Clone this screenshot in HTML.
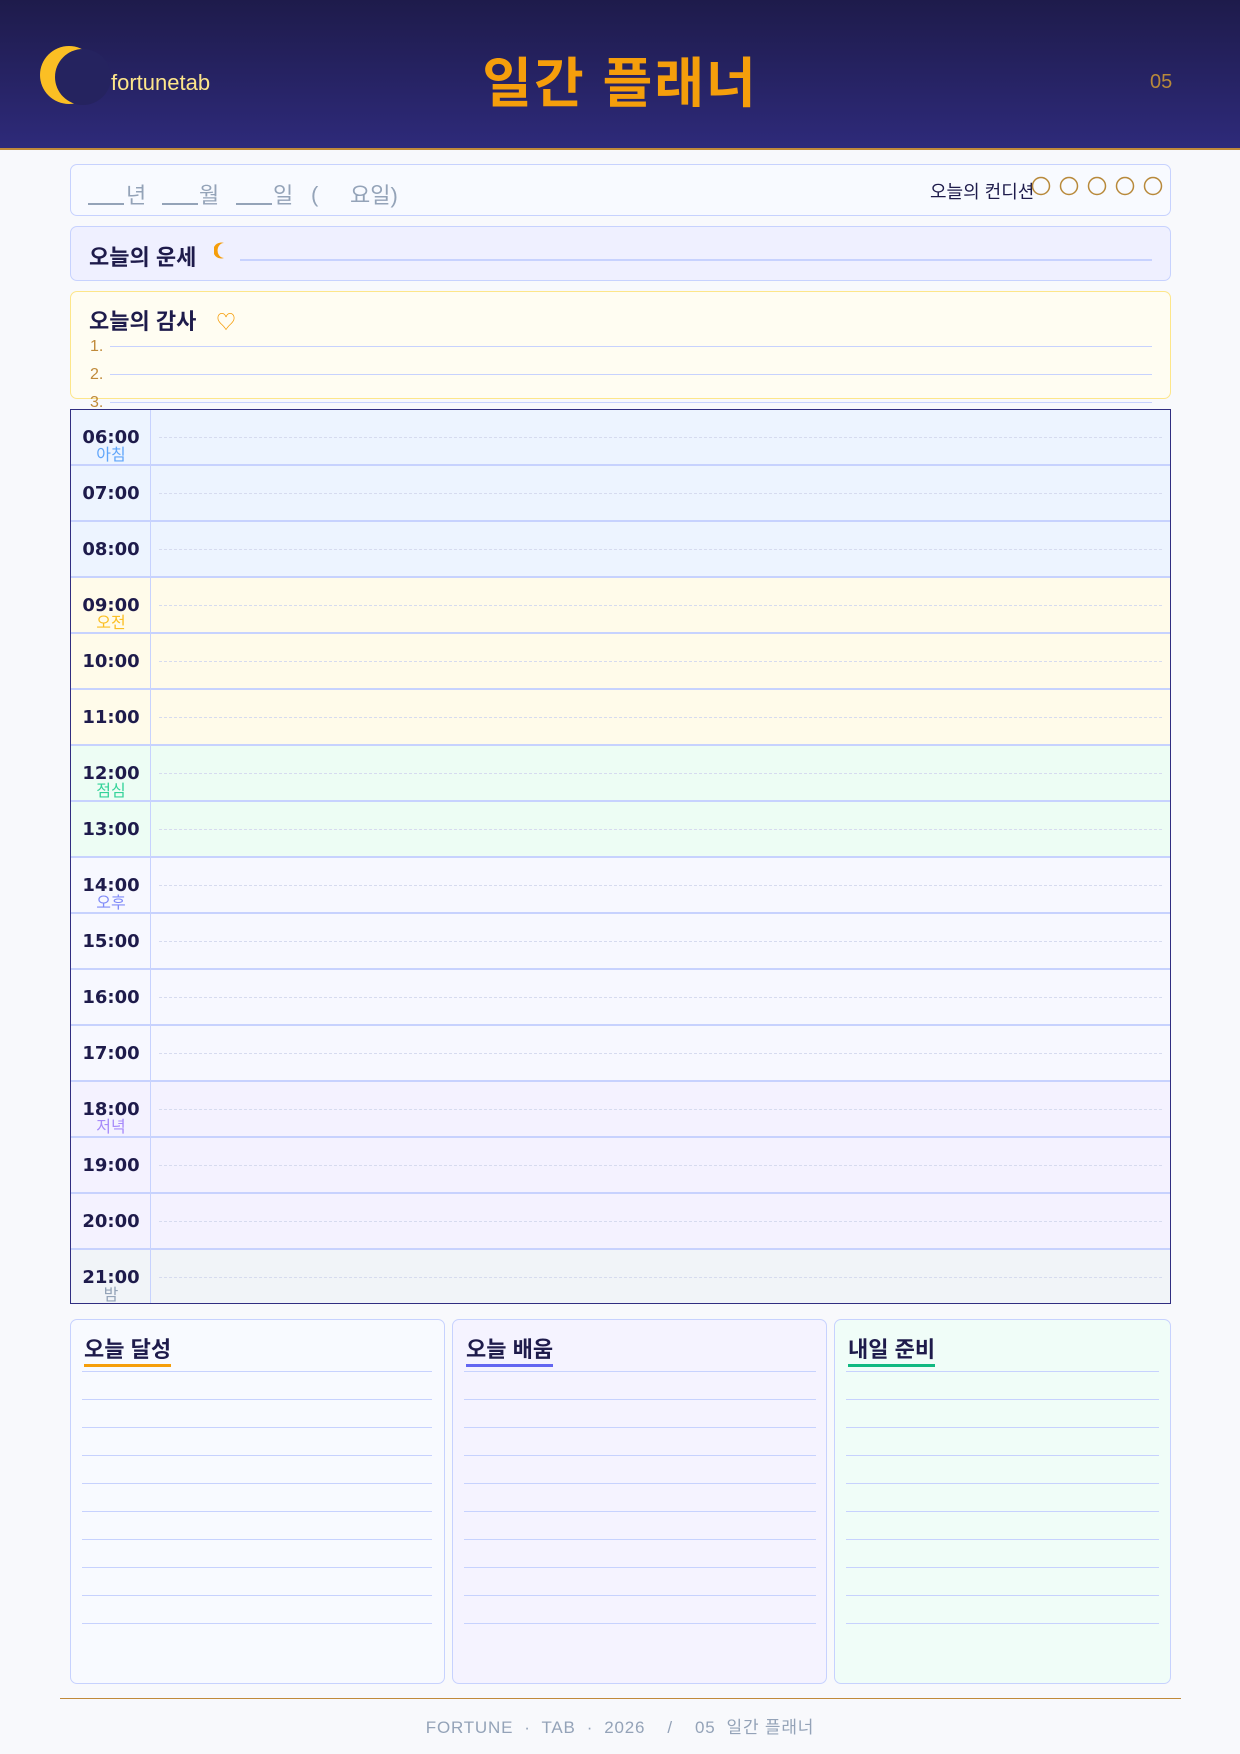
<!DOCTYPE html>
<html><head><meta charset="utf-8">
<style>
*{margin:0;padding:0;box-sizing:border-box}
body{width:1240px;height:1754px;background:#f8f9fc;position:relative;font-family:"Liberation Sans","Noto Sans CJK KR",sans-serif;overflow:hidden}
.abs{position:absolute}
.hdr{left:0;top:0;width:1240px;height:150px;background:linear-gradient(#1e1b4b,#2e2a7a);border-bottom:2px solid #c08a3a}
.box{position:absolute;border:1px solid #c7d2fe;border-radius:7px}
.tt{position:absolute;left:70px;top:409px;width:1101px;height:895px;border:1.5px solid #312e81;background:#fff;overflow:hidden}
.row{position:absolute;left:0;width:100%;height:56px;border-bottom:2px solid #c7d2fe}
.row .lc{position:absolute;left:0;top:0;width:80px;height:56px;border-right:1px solid #c7d2fe}
.row .t{position:absolute;left:0;width:80px;top:17px;text-align:center;font-family:"DejaVu Sans",sans-serif;font-weight:bold;font-size:18px;color:#1e1b4b}
.row .d{position:absolute;left:88px;right:8px;top:27px;border-top:1px dashed #d6dbef}
.row .lab{position:absolute;left:0;width:80px;top:31px;text-align:center;font-size:16px}
.ln{position:absolute;height:1px;background:#c7d2fe}
.bt{position:absolute;font-size:22px;font-weight:bold;color:#1e1b4b;top:12px;left:13px;padding-bottom:0px}
.dt{position:absolute;top:178px;font-size:22px;color:#94a3b8}
.us{position:absolute;top:203px;height:2px;width:36px;background:#94a3b8}
</style></head><body>
<div class="abs hdr"></div>
<svg class="abs" style="left:30px;top:40px" width="90" height="75"><circle cx="39" cy="35" r="29" fill="#fbbf24"/><circle cx="53" cy="37" r="28" fill="#25235f"/></svg>
<div class="abs" style="left:111px;top:70px;font-size:22px;color:#fde68a">fortunetab</div>
<div class="abs" style="left:0;width:1240px;top:52px;text-align:center;font-size:54px;font-weight:bold;color:#f59e0b;line-height:64px;letter-spacing:2px">일간 플래너</div>
<div class="abs" style="left:1150px;top:71px;font-size:20px;color:#b8893a">05</div>

<div class="box" style="left:70px;top:164px;width:1101px;height:52px;background:#f8faff"></div>
<div class="us" style="left:88px"></div><div class="dt" style="left:126px">년</div>
<div class="us" style="left:162px"></div><div class="dt" style="left:199px">월</div>
<div class="us" style="left:236px"></div><div class="dt" style="left:273px">일</div>
<div class="dt" style="left:311px;top:182px">(</div><div class="dt" style="left:350px">요일)</div>
<div class="abs" style="left:930px;top:178px;font-size:18px;color:#1e1b4b">오늘의 컨디션</div>
<svg class="abs" style="left:1025px;top:170px" width="150" height="34"><g fill="none" stroke="#b8893a" stroke-width="1.5"><circle cx="16" cy="16" r="8.5"/><circle cx="44" cy="16" r="8.5"/><circle cx="72" cy="16" r="8.5"/><circle cx="100" cy="16" r="8.5"/><circle cx="128" cy="16" r="8.5"/></g></svg>

<div class="box" style="left:70px;top:226px;width:1101px;height:55px;background:#eff0ff"></div>
<div class="abs" style="left:89px;top:240px;font-size:22px;font-weight:bold;color:#1e1b4b">오늘의 운세</div>
<svg class="abs" style="left:214px;top:242px" width="14" height="18"><path d="M10 1 A8 8 0 1 0 10 16 A6 7 0 1 1 10 1Z" fill="#f59e0b"/></svg>
<div class="ln" style="left:240px;top:259px;width:912px;height:2px"></div>

<div class="box" style="left:70px;top:291px;width:1101px;height:108px;background:#fffdf2;border-color:#fde68a"></div>
<div class="abs" style="left:89px;top:304px;font-size:22px;font-weight:bold;color:#1e1b4b">오늘의 감사</div>
<div class="abs" style="left:216px;top:306px;font-size:20px;color:#f59e0b">♡</div>
<div class="abs" style="left:90px;top:338px;font-size:16px;color:#c08a3a">1.</div>
<div class="abs" style="left:90px;top:366px;font-size:16px;color:#c08a3a">2.</div>
<div class="abs" style="left:90px;top:394px;font-size:16px;color:#c08a3a">3.</div>
<div class="ln" style="left:110px;top:346px;width:1042px"></div>
<div class="ln" style="left:110px;top:374px;width:1042px"></div>
<div class="ln" style="left:110px;top:402px;width:1042px"></div>

<div class="tt">
<div class="row" style="top:0;background:#edf4ff"><div class="lc"></div><div class="t">06:00</div><div class="lab" style="color:#60a5fa">아침</div><div class="d"></div></div>
<div class="row" style="top:56px;background:#edf4ff"><div class="lc"></div><div class="t">07:00</div><div class="d"></div></div>
<div class="row" style="top:112px;background:#edf4ff"><div class="lc"></div><div class="t">08:00</div><div class="d"></div></div>
<div class="row" style="top:168px;background:#fffbea"><div class="lc"></div><div class="t">09:00</div><div class="lab" style="color:#fbbf24">오전</div><div class="d"></div></div>
<div class="row" style="top:224px;background:#fffbea"><div class="lc"></div><div class="t">10:00</div><div class="d"></div></div>
<div class="row" style="top:280px;background:#fffbea"><div class="lc"></div><div class="t">11:00</div><div class="d"></div></div>
<div class="row" style="top:336px;background:#edfdf4"><div class="lc"></div><div class="t">12:00</div><div class="lab" style="color:#34d399">점심</div><div class="d"></div></div>
<div class="row" style="top:392px;background:#edfdf4"><div class="lc"></div><div class="t">13:00</div><div class="d"></div></div>
<div class="row" style="top:448px;background:#f7f8ff"><div class="lc"></div><div class="t">14:00</div><div class="lab" style="color:#818cf8">오후</div><div class="d"></div></div>
<div class="row" style="top:504px;background:#f7f8ff"><div class="lc"></div><div class="t">15:00</div><div class="d"></div></div>
<div class="row" style="top:560px;background:#f7f8ff"><div class="lc"></div><div class="t">16:00</div><div class="d"></div></div>
<div class="row" style="top:616px;background:#f7f8ff"><div class="lc"></div><div class="t">17:00</div><div class="d"></div></div>
<div class="row" style="top:672px;background:#f4f2ff"><div class="lc"></div><div class="t">18:00</div><div class="lab" style="color:#a78bfa">저녁</div><div class="d"></div></div>
<div class="row" style="top:728px;background:#f4f2ff"><div class="lc"></div><div class="t">19:00</div><div class="d"></div></div>
<div class="row" style="top:784px;background:#f4f2ff"><div class="lc"></div><div class="t">20:00</div><div class="d"></div></div>
<div class="row" style="top:840px;background:#f1f4f8;border-bottom:none"><div class="lc"></div><div class="t">21:00</div><div class="lab" style="color:#94a3b8">밤</div><div class="d"></div></div>
</div>

<div class="box" style="left:70px;top:1319px;width:375px;height:365px;background:#f8faff"><div class="bt" style="border-bottom:3px solid #f59e0b">오늘 달성</div></div>
<div class="box" style="left:452px;top:1319px;width:375px;height:365px;background:#f5f3ff"><div class="bt" style="border-bottom:3px solid #6366f1">오늘 배움</div></div>
<div class="box" style="left:834px;top:1319px;width:337px;height:365px;background:#f0fdf8"><div class="bt" style="border-bottom:3px solid #10b981">내일 준비</div></div>
<div id="lines"></div>
<script>
var h='';for(var i=0;i<10;i++){var y=1371+i*28;h+='<div class="ln" style="left:82px;top:'+y+'px;width:350px"></div><div class="ln" style="left:464px;top:'+y+'px;width:352px"></div><div class="ln" style="left:846px;top:'+y+'px;width:313px"></div>';}
document.getElementById('lines').innerHTML=h;
</script>
<div class="abs" style="left:60px;top:1698px;width:1121px;height:1px;background:#c08a3a"></div>
<div class="abs" style="left:0;width:1240px;top:1713px;text-align:center;font-size:17px;color:#94a3b8;letter-spacing:0.8px;white-space:pre">FORTUNE  ·  TAB  ·  2026    /    05  일간 플래너</div>
</body></html>
